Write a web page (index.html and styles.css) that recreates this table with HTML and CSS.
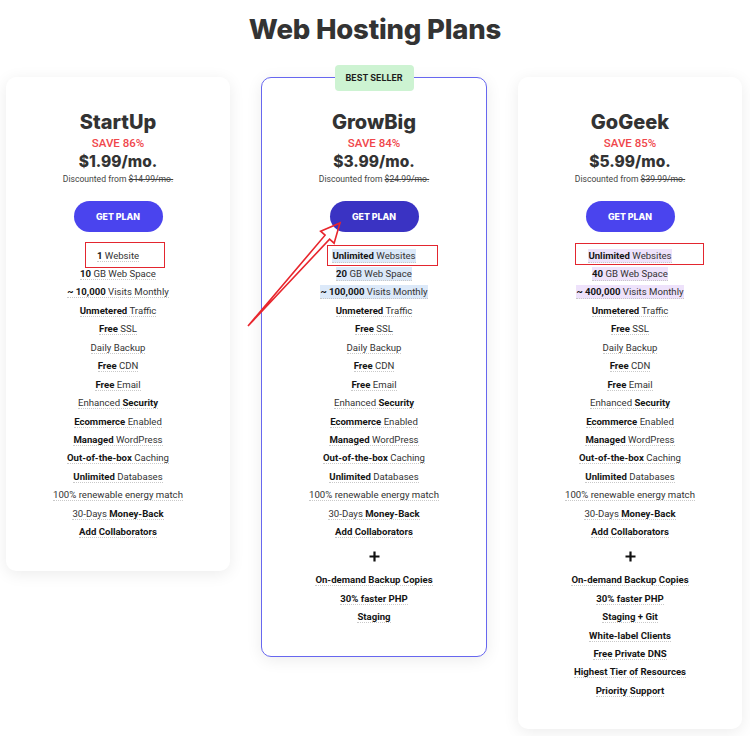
FILE: index.html
```html
<!DOCTYPE html>
<html lang="en">
<head>
<meta charset="utf-8">
<title>Web Hosting Plans</title>
<link rel="stylesheet" href="styles.css">
</head>
<body>
<h1 class="page-title">Web Hosting Plans</h1>
<div class="plans">
  <section class="plan">
    <h2 class="plan-name">StartUp</h2>
    <div class="plan-save">SAVE 86%</div>
    <div class="plan-price">$1.99/mo.</div>
    <div class="plan-orig">Discounted from <s>$14.99/mo.</s></div>
    <a class="btn" href="#">GET PLAN</a>
    <ul class="features">
      <li><span class="f"><b>1</b> Website</span><span class="mark mark-1"></span></li>
      <li><span class="f"><b>10</b> GB Web Space</span></li>
      <li><span class="f"><b>~ 10,000</b> Visits Monthly</span></li>
      <li><span class="f"><b>Unmetered</b> Traffic</span></li>
      <li><span class="f"><b>Free</b> SSL</span></li>
      <li><span class="f">Daily Backup</span></li>
      <li><span class="f"><b>Free</b> CDN</span></li>
      <li><span class="f"><b>Free</b> Email</span></li>
      <li><span class="f">Enhanced <b>Security</b></span></li>
      <li><span class="f"><b>Ecommerce</b> Enabled</span></li>
      <li><span class="f"><b>Managed</b> WordPress</span></li>
      <li><span class="f"><b>Out-of-the-box</b> Caching</span></li>
      <li><span class="f"><b>Unlimited</b> Databases</span></li>
      <li><span class="f">100% renewable energy match</span></li>
      <li><span class="f">30-Days <b>Money-Back</b></span></li>
      <li><span class="f"><b>Add Collaborators</b></span></li>
    </ul>
  </section>

  <section class="plan plan-featured">
    <div class="badge">BEST SELLER</div>
    <h2 class="plan-name">GrowBig</h2>
    <div class="plan-save">SAVE 84%</div>
    <div class="plan-price">$3.99/mo.</div>
    <div class="plan-orig">Discounted from <s>$24.99/mo.</s></div>
    <a class="btn btn-dark" href="#">GET PLAN</a>
    <ul class="features">
      <li><span class="f hl-blue"><b>Unlimited</b> Websites</span><span class="mark mark-2"></span></li>
      <li><span class="f hl-blue"><b>20</b> GB Web Space</span></li>
      <li><span class="f hl-blue"><b>~ 100,000</b> Visits Monthly</span></li>
      <li><span class="f"><b>Unmetered</b> Traffic</span></li>
      <li><span class="f"><b>Free</b> SSL</span></li>
      <li><span class="f">Daily Backup</span></li>
      <li><span class="f"><b>Free</b> CDN</span></li>
      <li><span class="f"><b>Free</b> Email</span></li>
      <li><span class="f">Enhanced <b>Security</b></span></li>
      <li><span class="f"><b>Ecommerce</b> Enabled</span></li>
      <li><span class="f"><b>Managed</b> WordPress</span></li>
      <li><span class="f"><b>Out-of-the-box</b> Caching</span></li>
      <li><span class="f"><b>Unlimited</b> Databases</span></li>
      <li><span class="f">100% renewable energy match</span></li>
      <li><span class="f">30-Days <b>Money-Back</b></span></li>
      <li><span class="f"><b>Add Collaborators</b></span></li>
      <li class="plus"><svg width="11" height="11" viewBox="0 0 11 11"><path d="M5.5 0.5V10.5M0.5 5.5H10.5" stroke="#111" stroke-width="2.2"/></svg></li>
      <li><span class="f"><b>On-demand Backup Copies</b></span></li>
      <li><span class="f"><b>30% faster PHP</b></span></li>
      <li><span class="f"><b>Staging</b></span></li>
    </ul>
  </section>

  <section class="plan">
    <h2 class="plan-name">GoGeek</h2>
    <div class="plan-save">SAVE 85%</div>
    <div class="plan-price">$5.99/mo.</div>
    <div class="plan-orig">Discounted from <s>$39.99/mo.</s></div>
    <a class="btn" href="#">GET PLAN</a>
    <ul class="features">
      <li><span class="f hl-purple"><b>Unlimited</b> Websites</span><span class="mark mark-3"></span></li>
      <li><span class="f hl-purple"><b>40</b> GB Web Space</span></li>
      <li><span class="f hl-purple"><b>~ 400,000</b> Visits Monthly</span></li>
      <li><span class="f"><b>Unmetered</b> Traffic</span></li>
      <li><span class="f"><b>Free</b> SSL</span></li>
      <li><span class="f">Daily Backup</span></li>
      <li><span class="f"><b>Free</b> CDN</span></li>
      <li><span class="f"><b>Free</b> Email</span></li>
      <li><span class="f">Enhanced <b>Security</b></span></li>
      <li><span class="f"><b>Ecommerce</b> Enabled</span></li>
      <li><span class="f"><b>Managed</b> WordPress</span></li>
      <li><span class="f"><b>Out-of-the-box</b> Caching</span></li>
      <li><span class="f"><b>Unlimited</b> Databases</span></li>
      <li><span class="f">100% renewable energy match</span></li>
      <li><span class="f">30-Days <b>Money-Back</b></span></li>
      <li><span class="f"><b>Add Collaborators</b></span></li>
      <li class="plus"><svg width="11" height="11" viewBox="0 0 11 11"><path d="M5.5 0.5V10.5M0.5 5.5H10.5" stroke="#111" stroke-width="2.2"/></svg></li>
      <li><span class="f"><b>On-demand Backup Copies</b></span></li>
      <li><span class="f"><b>30% faster PHP</b></span></li>
      <li><span class="f"><b>Staging + Git</b></span></li>
      <li><span class="f"><b>White-label Clients</b></span></li>
      <li><span class="f"><b>Free Private DNS</b></span></li>
      <li><span class="f"><b>Highest Tier of Resources</b></span></li>
      <li><span class="f"><b>Priority Support</b></span></li>
    </ul>
  </section>
</div>
<svg class="annot-arrow" width="750" height="736" viewBox="0 0 750 736">
  <polygon points="248,326 329.6,239.2 334.1,243.2 340,223 320.6,231.2 325.1,235.2" fill="none" stroke="#e8262d" stroke-width="1.6" stroke-linejoin="miter"/>
</svg>
</body>
</html>
```
FILE: styles.css
```css
* { box-sizing: border-box; }
html, body { margin: 0; padding: 0; background: #fff; }
body {
  position: relative;
  width: 750px;
  height: 736px;
  overflow: hidden;
  font-family: Roboto, "Liberation Sans", sans-serif;
  color: #333;
}
.page-title {
  margin: 0;
  padding-top: 12px;
  font-family: Inter, "Liberation Sans", sans-serif;
  font-weight: 800;
  font-size: 27.5px;
  line-height: 34px;
  text-align: center;
  color: #333;
  letter-spacing: -0.2px;
}
.plans {
  display: grid;
  grid-template-columns: 224px 226px 224px;
  column-gap: 31px;
  align-items: start;
  margin-top: 31px;
  padding-left: 6px;
}
.plan {
  position: relative;
  background: #fff;
  border-radius: 10px;
  box-shadow: 0 3px 16px rgba(0, 0, 0, 0.08);
  padding: 32.5px 0 29px;
  text-align: center;
}
.plan-featured {
  border: 1px solid #6767ef;
  padding-top: 31.5px;
  padding-bottom: 29px;
}
.badge {
  position: absolute;
  top: -13px;
  left: 50%;
  margin-left: -39.5px;
  width: 79px;
  height: 26px;
  line-height: 26px;
  background: #cdf3d2;
  border-radius: 4px;
  font-family: Inter, "Liberation Sans", sans-serif;
  font-weight: 700;
  font-size: 8.8px;
  color: #1d1d1d;
  text-align: center;
}
.plan-name {
  margin: 0;
  font-family: Inter, "Liberation Sans", sans-serif;
  font-weight: 800;
  font-size: 20px;
  line-height: 24px;
  color: #333;
}
.plan-save {
  font-family: Roboto, sans-serif;
  font-weight: 500;
  font-size: 11.5px;
  line-height: 18px;
  color: #f0464b;
}
.plan-price {
  font-family: Inter, "Liberation Sans", sans-serif;
  font-weight: 800;
  font-size: 15.5px;
  line-height: 20px;
  color: #333;
}
.plan-orig {
  font-size: 8.6px;
  line-height: 14px;
  color: #444;
}
.plan-orig s { color: #444; }
.btn {
  display: block;
  width: 89px;
  height: 31px;
  margin: 15.5px auto 0;
  border-radius: 16px;
  background: #4a44ee;
  color: #fff;
  text-decoration: none;
  font-family: Inter, "Liberation Sans", sans-serif;
  font-weight: 800;
  font-size: 8.8px;
  line-height: 31px;
}
.btn-dark { background: #3a33c3; }
.features {
  list-style: none;
  margin: 14.6px 0 0;
  padding: 0;
}
.features li {
  position: relative;
  height: 18.45px;
  line-height: 18.45px;
  font-size: 9.6px;
  color: #333;
}
.features b { font-weight: 700; color: #151515; }
.f {
  border-bottom: 1px dotted #c9c9c9;
}
.hl-blue { background: #dce9f9; padding: 1px 0; }
.hl-purple { background: #eee2fb; padding: 1px 0; }
.features li.plus {
  height: 29.6px;
  display: flex;
  align-items: center;
  justify-content: center;
}
.plus svg { display: block; }
.mark {
  position: absolute;
  border: 1.5px solid #e3262f;
}
.mark-1 { left: 79px; width: 80px; top: -4.6px; height: 25.6px; }
.mark-2 { left: 65.3px; width: 111px; top: -1.3px; height: 21px; }
.mark-3 { left: 57px; width: 129px; top: -3.6px; height: 21.6px; }
.annot-arrow {
  position: absolute;
  left: 0;
  top: 0;
  pointer-events: none;
}
```
